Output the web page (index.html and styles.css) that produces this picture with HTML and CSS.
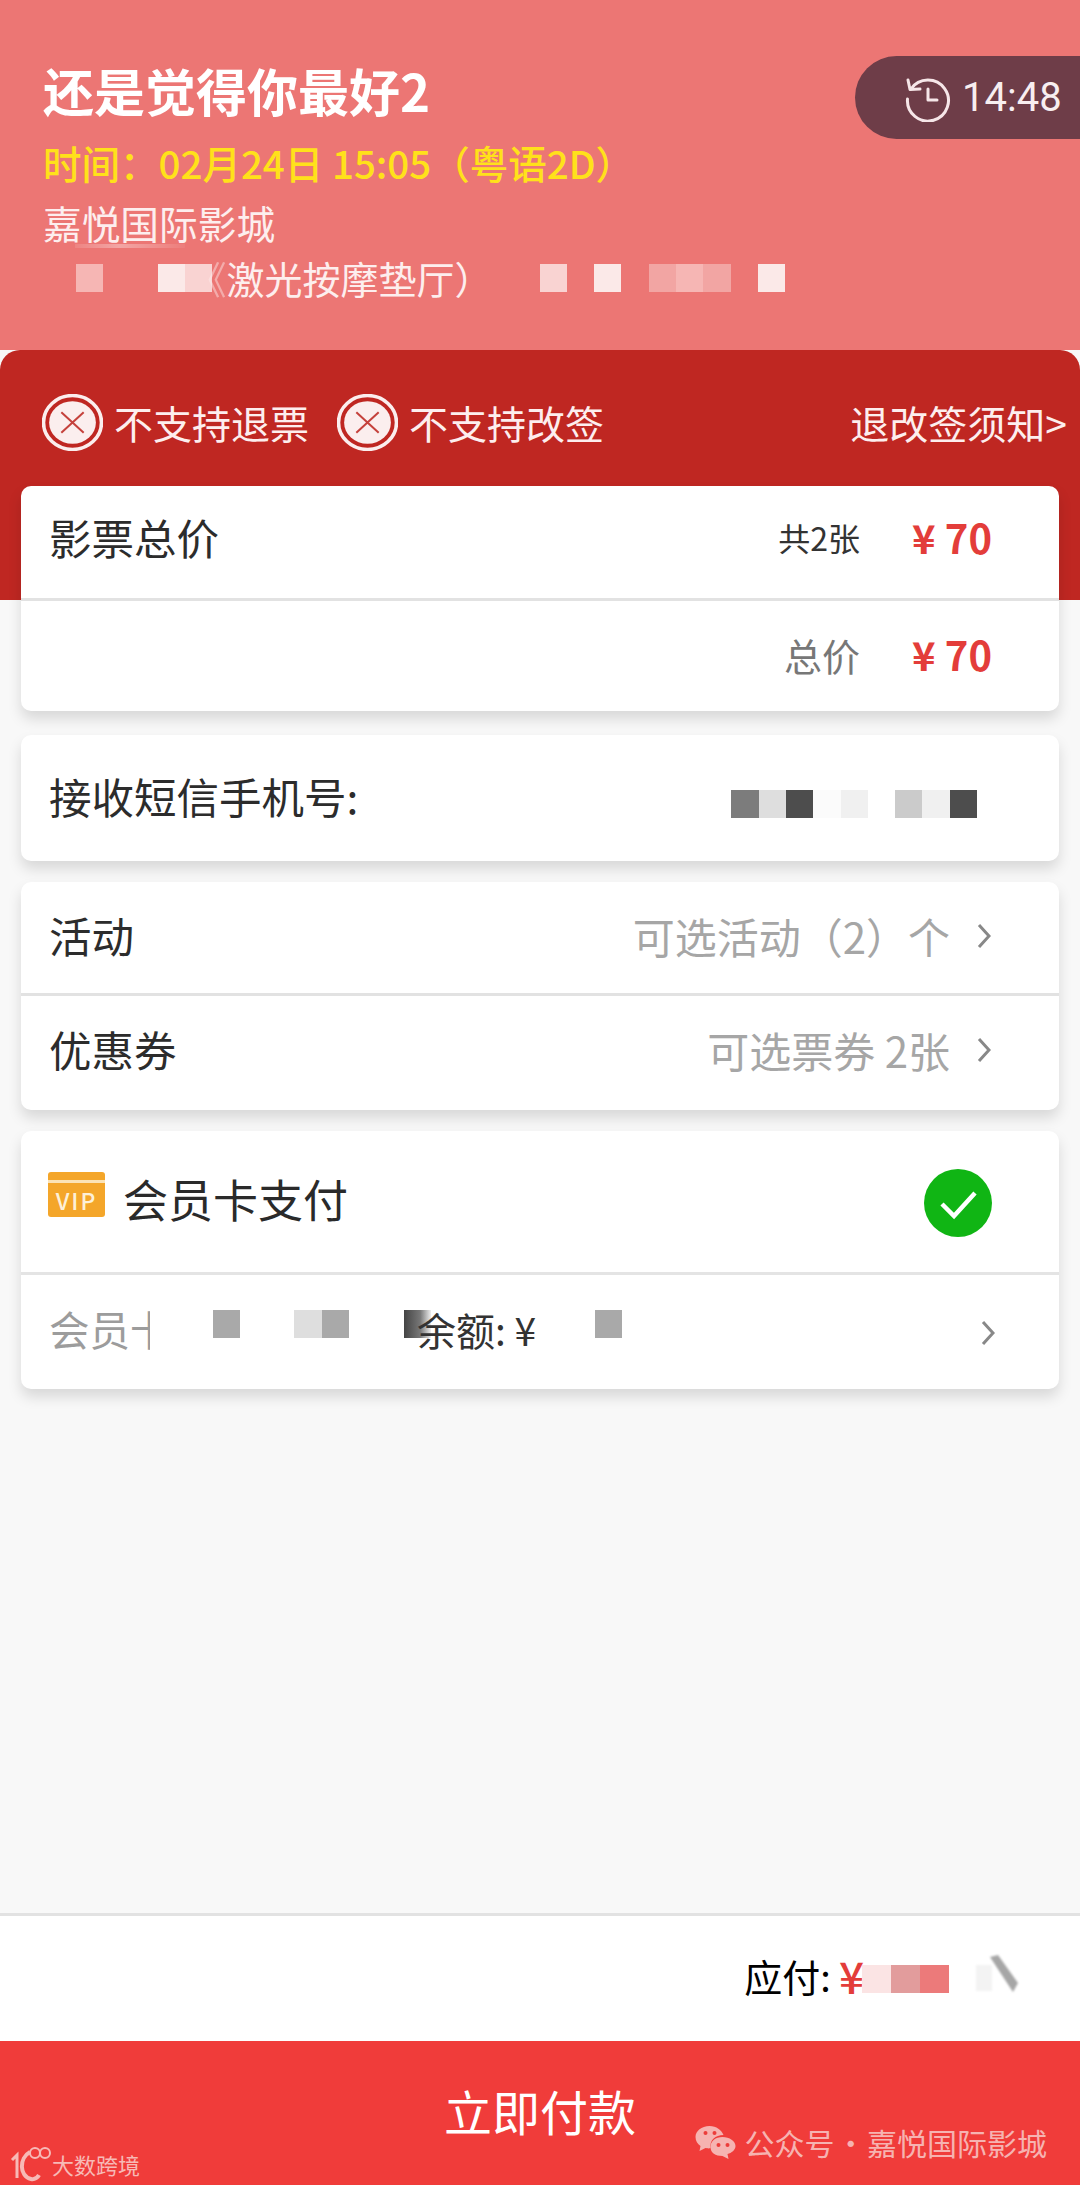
FILE: index.html
```html
<!DOCTYPE html>
<html lang="zh-CN">
<head>
  <meta charset="UTF-8">
  <meta name="viewport" content="width=device-width, initial-scale=1.0">
  <title>确认订单</title>
  <link rel="stylesheet" href="styles.css">
</head>
<body>
  <div class="page">
    <div class="header">
      <h1 class="movie-title">还是觉得你最好2</h1>
      <div class="movie-time">时间：02月24日 15:05（粤语2D）</div>
      <div class="cinema">嘉悦国际影城</div>
      <div class="hall">
        <i class="cell pink"></i><i class="cell"></i><i class="cell"></i><i class="cell white"></i><i class="cell pale"></i>
        <span class="hall-name"><span class="hall-faint">《</span>激光按摩垫厅）</span>
        <i class="cell pale gap-hall"></i><i class="cell"></i><i class="cell white"></i><i class="cell"></i><i class="cell rose"></i><i class="cell pink"></i><i class="cell rose"></i><i class="cell"></i><i class="cell white"></i>
      </div>
      <div class="timer">
        <svg class="timer-icon" viewBox="0 0 48 48" fill="none" stroke="#f6e6e8" stroke-width="3" stroke-linecap="round" stroke-linejoin="round">
          <path d="M7 15 A20.5 20.5 0 1 1 3.5 25"/>
          <path d="M4 6 L6 15.500 L16 15"/>
          <path d="M24 15 V26 H33"/>
        </svg>
        <span>14:48</span>
      </div>
    </div>

    <div class="notice-panel">
      <div class="notice-row">
        <svg class="notice-icon" viewBox="0 0 60 56" fill="none">
          <ellipse cx="30" cy="28" rx="28.500" ry="26.500" stroke="#fbeeee" stroke-width="3.500"/>
          <ellipse cx="30" cy="28" rx="23" ry="21" fill="#fbeeee"/>
          <path d="M19 18 L41 38 M41 18 L19 38" stroke="#c5413c" stroke-width="2"/>
        </svg>
        <span class="notice-text">不支持退票</span>
        <svg class="notice-icon second" viewBox="0 0 60 56" fill="none">
          <ellipse cx="30" cy="28" rx="28.500" ry="26.500" stroke="#fbeeee" stroke-width="3.500"/>
          <ellipse cx="30" cy="28" rx="23" ry="21" fill="#fbeeee"/>
          <path d="M19 18 L41 38 M41 18 L19 38" stroke="#c5413c" stroke-width="2"/>
        </svg>
        <span class="notice-text">不支持改签</span>
        <span class="notice-link">退改签须知&gt;</span>
      </div>
    </div>

    <div class="cards">
      <div class="card">
        <div class="row row-top">
          <span class="label">影票总价</span>
          <span class="count">共2张</span>
          <span class="price">¥ 70</span>
        </div>
        <div class="row row-total">
          <span class="total-label">总价</span>
          <span class="price">¥ 70</span>
        </div>
      </div>

      <div class="card card-phone">
        <div class="row row-phone">
          <span class="label">接收短信手机号:</span>
          <span class="phone-mosaic">
            <i class="cell g-mid"></i><i class="cell g-light"></i><i class="cell g-dark"></i><i class="cell g-faint"></i><i class="cell g-pale"></i><i class="cell"></i><i class="cell g-soft"></i><i class="cell g-pale"></i><i class="cell g-dark"></i>
          </span>
        </div>
      </div>

      <div class="card">
        <div class="row row-link">
          <span class="label">活动</span>
          <span class="hint">可选活动（2）个</span>
          <svg class="chevron" viewBox="0 0 14 26" fill="none" stroke="#888" stroke-width="3"><path d="M2 2 L12 13 L2 24"/></svg>
        </div>
        <div class="row row-link row-link-last">
          <span class="label">优惠券</span>
          <span class="hint">可选票券 2张</span>
          <svg class="chevron" viewBox="0 0 14 26" fill="none" stroke="#888" stroke-width="3"><path d="M2 2 L12 13 L2 24"/></svg>
        </div>
      </div>

      <div class="card">
        <div class="row row-member">
          <span class="vip-icon"><span class="vip-text">VIP</span></span>
          <span class="member-title">会员卡支付</span>
          <svg class="check" viewBox="0 0 68 68">
            <circle cx="34" cy="34" r="34" fill="#10b514"/>
            <path d="M18 35 L30 47 L51 24" fill="none" stroke="#fff" stroke-width="4.500"/>
          </svg>
        </div>
        <div class="row row-balance">
          <span class="member-no">会员卡</span>
          <i class="member-mask"></i>
          <span class="balance-mosaic">
            <i class="cell g-gray"></i><i class="cell"></i><i class="cell"></i><i class="cell g-light"></i><i class="cell g-gray"></i><i class="cell"></i><i class="cell"></i><i class="cell g-fade"></i>
          </span>
          <span class="balance-text">余额: ¥</span>
          <span class="balance-mosaic tail"><i class="cell g-gray"></i></span>
          <svg class="chevron chevron-balance" viewBox="0 0 14 26" fill="none" stroke="#888" stroke-width="3"><path d="M2 2 L12 13 L2 24"/></svg>
        </div>
      </div>
    </div>

    <div class="spacer"></div>

    <div class="pay-bar">
      <span class="pay-label">应付:</span>
      <span class="pay-yen">¥</span>
      <span class="pay-mosaic"><i class="cell r-faint"></i><i class="cell r-pale"></i><i class="cell r-mid"></i></span>
      <svg class="pay-smudge" viewBox="0 0 44 40">
        <rect x="0" y="10" width="16" height="26" fill="#f3f3f3"/>
        <path d="M14 2 L22 0 L42 28 L37 37 Z" fill="#a6a6a6"/>
      </svg>
    </div>

    <div class="pay-button">
      立即付款
      <div class="mark-left">
        <svg class="mark-logo" viewBox="0 0 42 40" fill="none" stroke="#f7b9b6">
          <path d="M3 16 L8 11 V34" stroke-width="3"/>
          <path d="M21 8 C10 14 10 32 22 35 C26 36 29 33 30 31" stroke-width="4"/>
          <circle cx="26" cy="9" r="5" stroke-width="2"/>
          <circle cx="36" cy="9" r="5" stroke-width="2"/>
        </svg>
        <span>大数跨境</span>
      </div>
      <div class="mark-right">
        <svg class="mark-wechat" viewBox="0 0 40 34">
          <path d="M14 1 C6 1 0 6 0 12 C0 16 2 19 5 21 L4 26 L10 23 C11 23 13 24 15 23 C14 15 20 10 28 10 C26 5 21 1 14 1 Z" fill="#f6b3b1"/>
          <path d="M27 12 C20 12 15 16 15 22 C15 28 20 31 27 31 L33 34 L32 29 C36 28 40 25 40 21 C40 16 34 12 27 12 Z" fill="#f6b3b1"/>
          <circle cx="10" cy="8" r="2" fill="#ec3d3b"/>
          <circle cx="19" cy="8" r="2" fill="#ec3d3b"/>
          <circle cx="23" cy="20" r="2" fill="#ec3d3b"/>
          <circle cx="32" cy="20" r="2" fill="#ec3d3b"/>
        </svg>
        <span>公众号 · 嘉悦国际影城</span>
      </div>
    </div>
  </div>
</body>
</html>
```

FILE: styles.css
```css
* {
  box-sizing: border-box;
}
body {
  margin: 0;
  font-family: "Noto Sans CJK SC", "Liberation Sans", sans-serif;
  background-color: #f8f8f8;
  color: #333;
}
.page {
  display: flex;
  flex-direction: column;
  width: 1080px;
  height: 2185px;
  overflow: hidden;
}
.cell {
  display: block;
  flex: none;
  width: 27.3px;
  height: 28px;
}

/* header */
.header {
  position: relative;
  height: 350px;
  padding: 55px 0 0 43px;
  background-color: #ec7674;
  color: #fff;
}
.movie-title {
  margin: 0;
  font-size: 51px;
  line-height: 70px;
  font-weight: 700;
}
.movie-time {
  margin-top: 2px;
  font-size: 38.5px;
  line-height: 70px;
  font-weight: 500;
  color: #ffe11a;
}
.cinema {
  position: relative;
  font-size: 38.7px;
  line-height: 50px;
  color: #fdeeee;
}
/* pale smear left under the cinema name */
.cinema::after {
  content: "";
  position: absolute;
  left: 32px;
  top: 47px;
  width: 110px;
  height: 4px;
  background: linear-gradient(90deg, rgba(255, 255, 255, 0.1), rgba(255, 255, 255, 0.35) 40%, rgba(255, 255, 255, 0.05));
}
.hall {
  display: flex;
  align-items: center;
  height: 50px;
  margin: 6px 0 0 33px;
}
.hall-name {
  margin-left: -24px;
  font-size: 38px;
  line-height: 50px;
  color: #fdeeee;
}
.hall-faint {
  opacity: 0.45;
}
.gap-hall {
  margin-left: 47px;
}
.pink { background-color: #f6b6b4; }
.rose { background-color: #f2a5a3; }
.pale { background-color: #f9d3d2; }
.white { background-color: #fbe9e8; }
.timer {
  position: absolute;
  top: 56px;
  right: 0;
  display: flex;
  align-items: center;
  width: 225px;
  height: 83px;
  padding-left: 49px;
  background-color: #6e3d48;
  border-radius: 42px 0 0 42px;
  font-family: Roboto, sans-serif;
  font-size: 40px;
  color: #f8eef0;
}
.timer-icon {
  width: 48px;
  height: 48px;
  margin-right: 10px;
}

/* red panel */
.notice-panel {
  height: 250px;
  background-color: #bf2722;
  border-radius: 20px 20px 0 0;
}
.notice-row {
  display: flex;
  align-items: center;
  height: 136px;
  padding: 8px 13px 0 42px;
  color: #fdeeee;
  font-size: 39px;
}
.notice-icon {
  flex: none;
  width: 61px;
  height: 57px;
}
.notice-icon.second {
  margin-left: 28px;
}
.notice-text {
  margin-left: 11px;
  line-height: 1;
}
.notice-link {
  margin-left: auto;
  line-height: 1;
}

/* cards */
.cards {
  display: flex;
  flex-direction: column;
  gap: 21px;
  margin: -114px 21px 0;
}
.card {
  background-color: #fff;
  border-radius: 10px;
  box-shadow: 0 8px 14px rgba(0, 0, 0, 0.13);
  overflow: hidden;
}
.card-phone {
  margin-top: 3px;
}
.row {
  display: flex;
  align-items: center;
  padding: 0 67px 0 28px;
}
.label {
  font-size: 42.5px;
  line-height: 1;
  color: #2c2c2c;
}
.row-top {
  height: 115px;
  border-bottom: 3px solid #e2e2e2;
  padding-bottom: 10px;
}
.row-total {
  justify-content: flex-end;
  height: 110px;
  padding-bottom: 4px;
}
.count {
  margin-left: auto;
  font-size: 32px;
  color: #333;
}
.price {
  width: 80px;
  margin-left: 52px;
  font-size: 40px;
  font-weight: 700;
  color: #e33d3a;
  white-space: nowrap;
  text-align: right;
}
.total-label {
  font-size: 38px;
  color: #777;
}
.row-phone {
  height: 126px;
  padding-right: 82px;
  padding-bottom: 4px;
}
.phone-mosaic {
  display: flex;
  margin-left: auto;
  margin-top: 16px;
}
.g-mid { background-color: #7c7c7c; }
.g-light { background-color: #dedede; }
.g-dark { background-color: #4d4d4d; }
.g-faint { background-color: #fbfbfb; }
.g-pale { background-color: #f0f0f0; }
.g-soft { background-color: #cbcbcb; }
.g-gray { background-color: #a9a9a9; }
.g-fade { background: linear-gradient(90deg, #444, #777 60%, #eee); }
.row-link {
  height: 114px;
  padding-right: 68px;
  padding-bottom: 4px;
  border-bottom: 3px solid #e2e2e2;
}
.row-link-last {
  height: 114px;
  padding-bottom: 7px;
  border-bottom: none;
}
.hint {
  margin-left: auto;
  font-size: 42px;
  color: #a6a6a6;
  white-space: nowrap;
}
.chevron {
  flex: none;
  width: 14px;
  height: 26px;
  margin-left: 27px;
}
.row-member {
  height: 144px;
  padding-bottom: 6px;
  border-bottom: 3px solid #e4e4e4;
}
.vip-icon {
  display: flex;
  align-items: flex-end;
  justify-content: center;
  width: 57px;
  height: 45px;
  margin: -8px 0 0 -1px;
  background: linear-gradient(#f4a62a 0 8px, #fbe3b6 8px 11px, #f4a62a 11px);
  border-radius: 3px;
}
.vip-text {
  font-size: 23px;
  line-height: 33px;
  font-weight: 500;
  color: #fdf0d8;
  letter-spacing: 2px;
}
.member-title {
  margin-left: 18px;
  font-size: 45px;
  line-height: 1;
  color: #2a2a2a;
}
.check {
  width: 68px;
  height: 68px;
  margin: 8px 0 0 auto;
}
.row-balance {
  height: 114px;
  padding-right: 64px;
  padding-bottom: 6px;
}
.member-no {
  flex: none;
  font-size: 40.5px;
  line-height: 1;
  color: #9c9c9c;
  white-space: nowrap;
}
/* the card number is masked out from the last character onward */
.member-mask {
  flex: none;
  width: 26px;
  height: 50px;
  margin-left: -21px;
  background-color: #fff;
}
.balance-mosaic {
  display: flex;
  margin: -10px 0 0 37px;
}
.balance-mosaic.tail {
  margin-left: 59px;
}
.balance-text {
  position: relative;
  margin-left: -14px;
  font-size: 39px;
  line-height: 1;
  color: #333;
  white-space: nowrap;
}
.chevron-balance {
  margin: 8px 0 0 auto;
}
.spacer {
  flex: 1;
}

/* bottom */
.pay-bar {
  display: flex;
  align-items: center;
  justify-content: flex-end;
  height: 128px;
  padding: 0 60px 7px 0;
  background-color: #fff;
  border-top: 3px solid #e2e2e2;
}
.pay-label {
  font-size: 38px;
  color: #000;
}
.pay-yen {
  margin-left: 8px;
  margin-right: -2px;
  font-size: 44px;
  line-height: 1;
  font-weight: 500;
  color: #e33d3a;
}
.pay-mosaic {
  display: flex;
  margin-top: 8px;
}
.pay-mosaic .cell {
  width: 29px;
}
.r-faint { background-color: #fbe4e4; }
.r-pale { background-color: #e29c9c; }
.r-mid { background-color: #ec7a7a; }
.pay-smudge {
  width: 44px;
  height: 40px;
  margin-left: 27px;
  filter: blur(1px);
}
.pay-button {
  position: relative;
  height: 144px;
  background-color: #f03c3a;
  color: #fff;
  font-size: 48px;
  line-height: 138px;
  text-align: center;
}
.mark-left, .mark-right {
  position: absolute;
  display: flex;
  align-items: center;
  line-height: 1;
}
.mark-left {
  left: 9px;
  bottom: 1px;
  font-size: 22px;
  color: #f7b9b6;
}
.mark-logo {
  width: 42px;
  height: 40px;
  margin-right: 1px;
}
.mark-right {
  right: 33px;
  bottom: 26px;
  font-size: 30px;
  word-spacing: -5.5px;
  color: #f6b3b1;
}
.mark-wechat {
  width: 41px;
  height: 34px;
  margin-right: 9px;
}
```
